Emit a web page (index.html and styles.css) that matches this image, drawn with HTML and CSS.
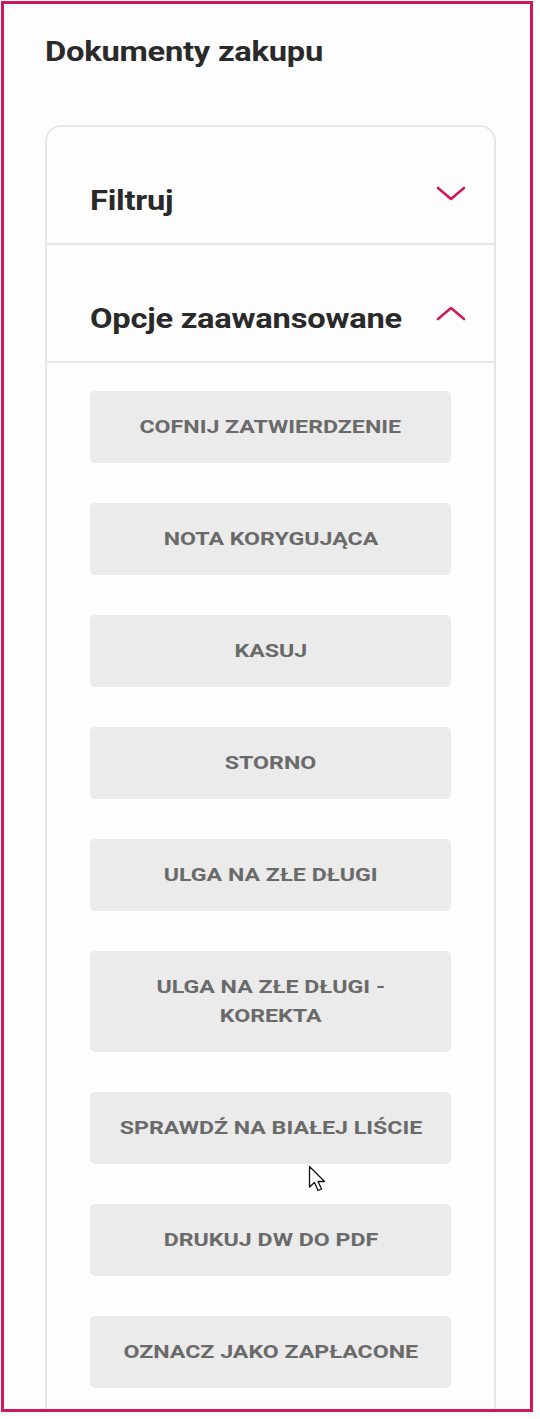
FILE: index.html
```html
<!DOCTYPE html>
<html lang="pl">
<head>
<meta charset="utf-8">
<title>Dokumenty zakupu</title>
<link rel="stylesheet" href="styles.css">
</head>
<body>
<div class="frame">
  <h1 class="title"><span class="wide">Dokumenty zakupu</span></h1>
  <div class="card">
    <div class="section-head">
      <span class="section-title wide">Filtruj</span>
      <svg class="chev" width="30" height="16" viewBox="0 0 30 16"><path d="M2 2 L15 13 L28 2" fill="none" stroke="#d0185e" stroke-width="2.6" stroke-linecap="round" stroke-linejoin="round"/></svg>
    </div>
    <div class="section-head">
      <span class="section-title wide">Opcje zaawansowane</span>
      <svg class="chev up" width="30" height="16" viewBox="0 0 30 16"><path d="M2 14 L15 3 L28 14" fill="none" stroke="#d0185e" stroke-width="2.6" stroke-linecap="round" stroke-linejoin="round"/></svg>
    </div>
    <div class="actions">
      <button class="btn"><span class="btn-label">COFNIJ ZATWIERDZENIE</span></button>
      <button class="btn"><span class="btn-label">NOTA KORYGUJĄCA</span></button>
      <button class="btn"><span class="btn-label">KASUJ</span></button>
      <button class="btn"><span class="btn-label">STORNO</span></button>
      <button class="btn"><span class="btn-label">ULGA NA ZŁE DŁUGI</span></button>
      <button class="btn"><span class="btn-label">ULGA NA ZŁE DŁUGI -<br>KOREKTA</span></button>
      <button class="btn"><span class="btn-label">SPRAWDŹ NA BIAŁEJ LIŚCIE</span></button>
      <button class="btn"><span class="btn-label">DRUKUJ DW DO PDF</span></button>
      <button class="btn"><span class="btn-label">OZNACZ JAKO ZAPŁACONE</span></button>
    </div>
  </div>
  <svg class="cursor" width="20" height="30" viewBox="0 0 20 30"><path d="M1.5 1.5 L1.5 22 L6.5 17.5 L10 25.5 L13.5 24 L10 16.5 L16.5 16.5 Z" fill="#fff" stroke="#111" stroke-width="1.3" stroke-linejoin="round"/></svg>
</div>
</body>
</html>
```
FILE: styles.css
```css
html, body {
  margin: 0;
  padding: 0;
  background: #fdfdfd;
}
body {
  font-family: Roboto, "Liberation Sans", Arial, sans-serif;
}
.frame {
  position: relative;
  margin: 1px 0 0 1px;
  width: 532px;
  height: 1411px;
  border: 3px solid #d0175c;
  box-sizing: border-box;
  overflow: hidden;
  background: #fdfdfd;
  padding: 31px 0 0 41px;
}
.wide {
  display: inline-block;
  transform: scaleX(1.21);
  transform-origin: left center;
}
.title {
  margin: 0;
  font-size: 27px;
  line-height: 34px;
  font-weight: 700;
  color: #2a2a2a;
  letter-spacing: -0.2px;
}
.card {
  margin-top: 56px;
  width: 451px;
  box-sizing: border-box;
  border: 2px solid #e7e7e7;
  border-bottom: none;
  border-radius: 16px 16px 0 0;
  background: #fdfdfd;
  height: 1400px;
}
.section-head {
  display: flex;
  align-items: center;
  justify-content: space-between;
  height: 118px;
  box-sizing: border-box;
  padding: 58px 28px 26px 43px;
  border-bottom: 2px solid #e7e7e7;
}
.section-title {
  font-size: 27px;
  line-height: 32px;
  font-weight: 700;
  color: #2a2a2a;
  letter-spacing: -0.2px;
}
.chev {
  display: block;
  margin-top: -14px;
}
.chev.up {
  margin-top: -12px;
}
.actions {
  display: flex;
  flex-direction: column;
  align-items: center;
  gap: 40px;
  padding-top: 28px;
}
.btn {
  width: 361px;
  border: none;
  border-radius: 5px;
  background: #ebebeb;
  color: #6a6a6a;
  font-family: Roboto, "Liberation Sans", Arial, sans-serif;
  font-size: 19px;
  font-weight: 700;
  line-height: 29px;
  padding: 21px 20px 22px;
  text-align: center;
}
.btn-label {
  display: inline-block;
  transform: scaleX(1.22);
  transform-origin: center center;
}
.cursor {
  position: absolute;
  left: 304px;
  top: 1161px;
}
```
